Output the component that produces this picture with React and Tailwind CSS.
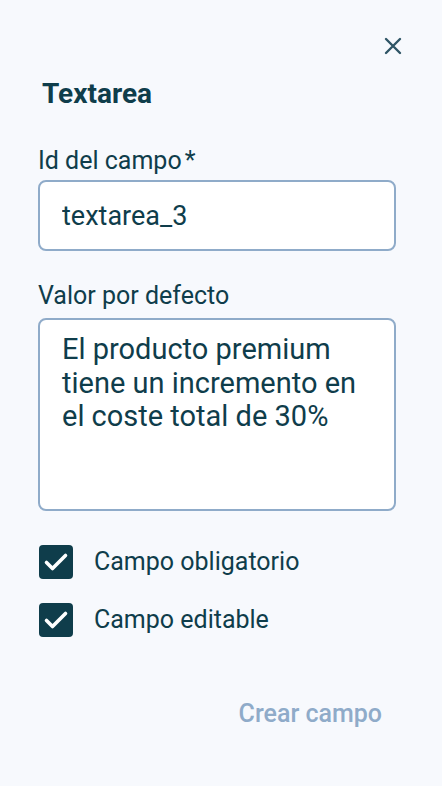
import { useState } from 'react';

export default function App() {
  const [fieldId, setFieldId] = useState('textarea_3');
  const [defaultValue, setDefaultValue] = useState(
    'El producto premium tiene un incremento en el coste total de 30%'
  );
  const [required, setRequired] = useState(true);
  const [editable, setEditable] = useState(true);

  return (
    <div
      className="min-h-[786px] w-[442px] bg-[#f7f9fd] pl-[38px] pr-[46px] text-[#0f3d4b]"
      style={{ fontFamily: 'Roboto, "Liberation Sans", sans-serif' }}
    >
      {/* Header */}
      <div className="flex justify-end pt-[37px] -mr-[6px]">
        <button className="flex h-[18px] w-[18px] items-center justify-center text-[#2f5566]">
          <svg width="18" height="18" viewBox="0 0 18 18" fill="none">
            <path d="M2 2L16 16M16 2L2 16" stroke="currentColor" strokeWidth="2.4" strokeLinecap="round" />
          </svg>
        </button>
      </div>

      <h2 className="mt-[22px] ml-[4px] text-[28px] font-bold leading-[34px]">Textarea</h2>

      {/* Field id */}
      <label className="mt-[35px] block text-[25px] leading-[30px]">
        Id del campo<span className="ml-[3px]">*</span>
      </label>
      <input
        value={fieldId}
        onChange={(e) => setFieldId(e.target.value)}
        className="mt-[4px] block h-[71px] w-full rounded-[8px] border-2 border-[#8fabc9] bg-white px-[22px] text-[27px] text-[#0f3d4b] outline-none"
      />

      {/* Default value */}
      <label className="mt-[30px] block text-[25px] leading-[30px]">Valor por defecto</label>
      <textarea
        value={defaultValue}
        onChange={(e) => setDefaultValue(e.target.value)}
        className="mt-[7px] block h-[193px] w-full resize-none rounded-[8px] border-2 border-[#8fabc9] bg-white px-[22px] pt-[13px] text-[29px] leading-[33.6px] text-[#0f3d4b] outline-none"
      />

      {/* Checkboxes */}
      <div className="mt-[34px] flex flex-col gap-[24px]">
        <Check label="Campo obligatorio" checked={required} onChange={() => setRequired(!required)} />
        <Check label="Campo editable" checked={editable} onChange={() => setEditable(!editable)} />
      </div>

      <div className="mt-[62px] flex justify-end pr-[14px]">
        <button className="text-[25px] font-medium leading-[30px] text-[#8fabc9]">Crear campo</button>
      </div>
    </div>
  );
}

function Check({ label, checked, onChange }) {
  return (
    <button onClick={onChange} className="flex items-center gap-[21px] text-left">
      <span className="ml-[1px] flex h-[34px] w-[34px] items-center justify-center rounded-[4px] bg-[#0f3d4b]">
        {checked && (
          <svg width="34" height="34" viewBox="0 0 34 34" fill="none">
            <path d="M7.5 17.5L13.5 23.5L26.5 10.5" stroke="white" strokeWidth="3.6" strokeLinecap="round" strokeLinejoin="round" />
          </svg>
        )}
      </span>
      <span className="text-[25px] leading-[30px]">{label}</span>
    </button>
  );
}
